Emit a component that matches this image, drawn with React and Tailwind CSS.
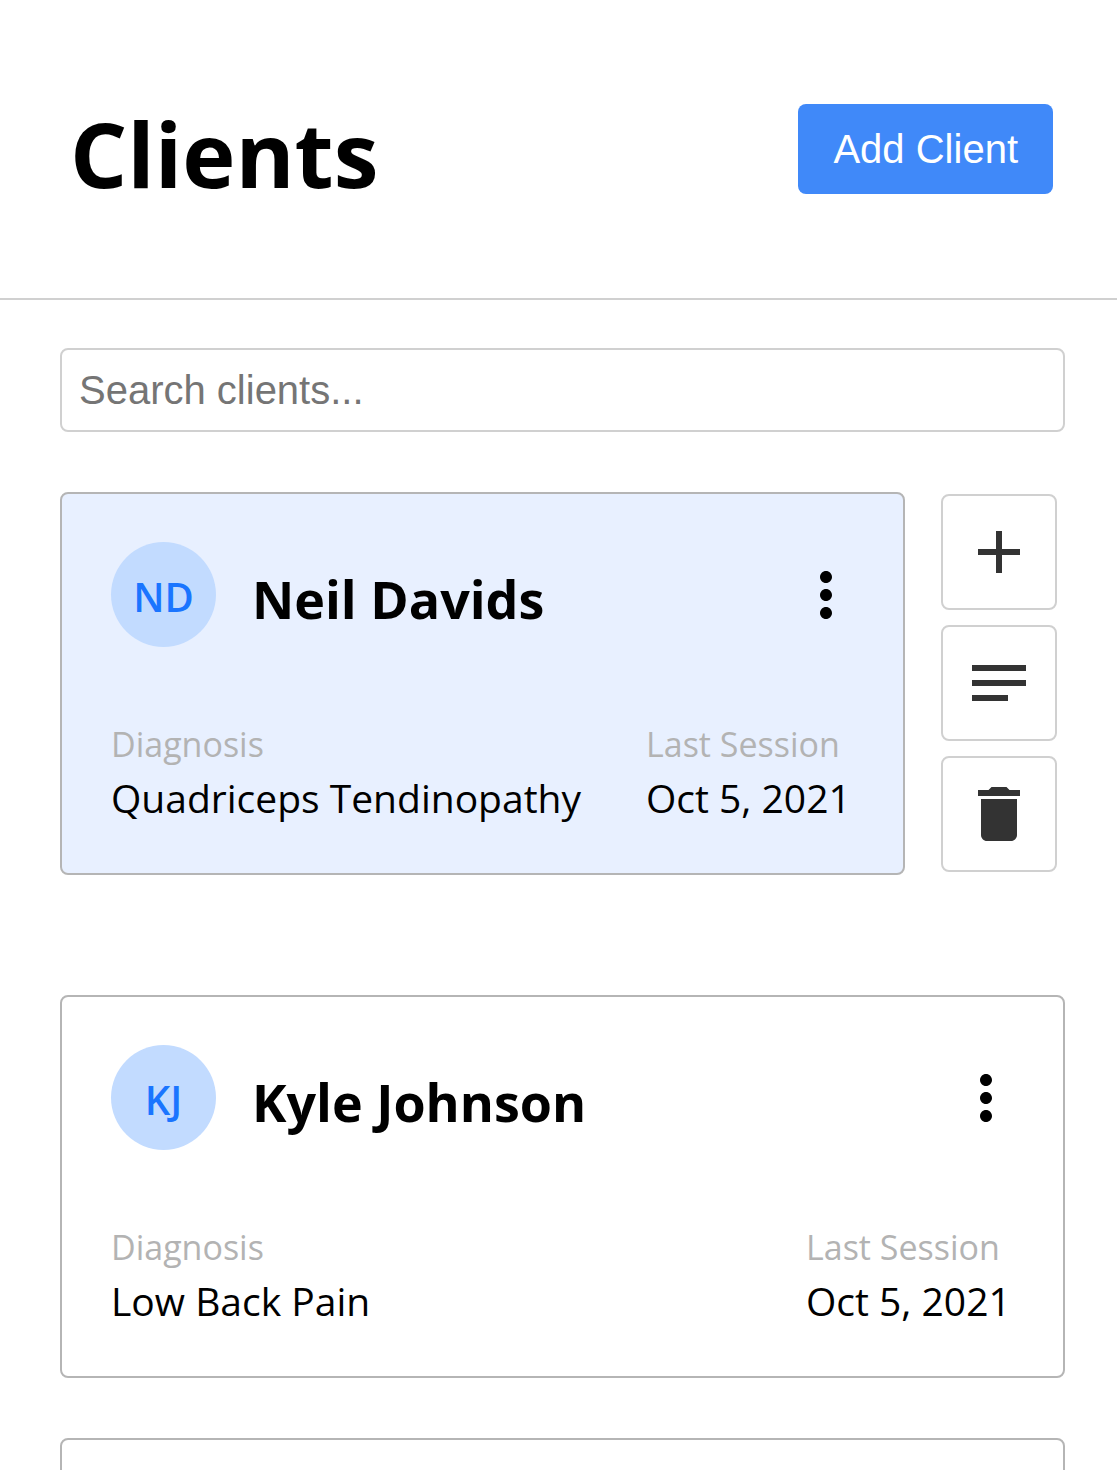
import React from "react";
import { MdAdd, MdNotes, MdDelete, MdMoreVert } from "react-icons/md";

const clients = [
  { initials: "ND", name: "Neil Davids", diagnosis: "Quadriceps Tendinopathy", session: "Oct 5, 2021", selected: true },
  { initials: "KJ", name: "Kyle Johnson", diagnosis: "Low Back Pain", session: "Oct 5, 2021", selected: false },
];

const actions = [
  { label: "Add session", Icon: MdAdd },
  { label: "Notes", Icon: MdNotes },
  { label: "Delete client", Icon: MdDelete },
];

function Field({ label, value }) {
  return (
    <div className="min-w-[208px]">
      <dt className="text-[34px] leading-[54px] text-[#b3b3b3]">{label}</dt>
      <dd className="text-[39px] leading-[54px]">{value}</dd>
    </div>
  );
}

function ClientCard({ client }) {
  return (
    <article
      className={
        "min-w-0 flex-1 rounded-lg border-2 border-[#b5b5b5] px-[49px] py-12 whitespace-nowrap " +
        (client.selected ? "bg-[#e8f0ff]" : "bg-white")
      }
    >
      <div className="flex items-center">
        <div className="flex size-[105px] shrink-0 items-center justify-center rounded-full bg-[#c2dbff] pt-1 text-[40px] font-semibold text-[#1a75ff]">
          {client.initials}
        </div>
        <h2 className="ml-9 flex-1 pt-2 text-[52px] leading-[72px] font-bold">{client.name}</h2>
        <button type="button" aria-label={"More options for " + client.name} className="-mr-2">
          <MdMoreVert className="size-[72px]" />
        </button>
      </div>
      <dl className="mt-[70px] flex justify-between">
        <Field label="Diagnosis" value={client.diagnosis} />
        <Field label="Last Session" value={client.session} />
      </dl>
    </article>
  );
}

export default function App() {
  return (
    <div className="h-screen overflow-hidden bg-white font-['Open_Sans','Noto_Sans',sans-serif] text-black">
      <header className="flex h-[300px] items-center justify-between border-b-2 border-[#d0d0d0] pr-16 pl-[70px]">
        <h1 className="pt-2 text-[90px] leading-[128px] font-bold">Clients</h1>
        <button
          type="button"
          className="h-[90px] rounded-lg bg-[#4089f9] px-[35px] font-['Liberation_Sans',Arial,sans-serif] text-[40px] text-white"
        >
          Add Client
        </button>
      </header>
      <main className="pt-12 pr-[52px] pl-[60px]">
        <input
          type="search"
          aria-label="Search clients"
          placeholder="Search clients..."
          className="h-[84px] w-full rounded-lg border-2 border-[#d0d0d0] px-[17px] font-['Liberation_Sans',Arial,sans-serif] text-[40px] placeholder:text-[#757575]"
        />
        <div className="flex flex-col pt-[60px]">
          {clients.map((client) => (
            <section key={client.name} className={client.selected ? "mb-[120px] flex" : "mb-[60px] flex"}>
              <ClientCard client={client} />
              {client.selected && (
                <div className="mr-2 ml-9 flex flex-col gap-[15px] pt-0.5">
                  {actions.map(({ label, Icon }) => (
                    <button
                      key={label}
                      type="button"
                      aria-label={label}
                      className="flex size-[116px] items-center justify-center rounded-lg border-2 border-[#d0d0d0] text-[#333333]"
                    >
                      <Icon className="size-[72px]" />
                    </button>
                  ))}
                </div>
              )}
            </section>
          ))}
          <article className="h-96 rounded-lg border-2 border-[#b5b5b5]" aria-hidden="true" />
        </div>
      </main>
    </div>
  );
}
